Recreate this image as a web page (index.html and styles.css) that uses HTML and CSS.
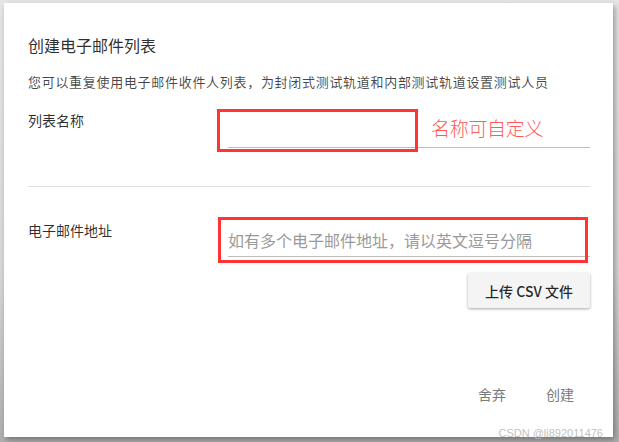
FILE: index.html
```html
<!DOCTYPE html>
<html lang="zh-CN">
<head>
<meta charset="utf-8">
<title>创建电子邮件列表</title>
<link rel="stylesheet" href="styles.css">
</head>
<body>
<div class="dialog">
  <h1 class="title">创建电子邮件列表</h1>
  <p class="subtitle">您可以重复使用电子邮件收件人列表，为封闭式测试轨道和内部测试轨道设置测试人员</p>

  <div class="row row-name">
    <div class="label">列表名称</div>
    <div class="field field-name">
      <span class="mark mark-name"></span>
      <span class="note">名称可自定义</span>
    </div>
  </div>

  <div class="divider"></div>

  <div class="row row-email">
    <div class="label">电子邮件地址</div>
    <div class="field-col">
      <div class="field field-email">
        <span class="placeholder">如有多个电子邮件地址，请以英文逗号分隔</span>
        <span class="mark mark-email"></span>
      </div>
      <button class="upload">上传 CSV 文件</button>
    </div>
  </div>

  <div class="footer">
    <button class="flat">舍弃</button>
    <button class="flat">创建</button>
  </div>

  <span class="watermark">CSDN @li892011476</span>
</div>
</body>
</html>
```

FILE: styles.css
```css
html, body {
  margin: 0;
  padding: 0;
}
body {
  width: 619px;
  height: 442px;
  overflow: hidden;
  background: linear-gradient(to bottom, #e6e6e6 0, #d9d9d9 60%, #b0b0b0 100%);
  font-family: "Noto Sans CJK SC", "Noto Sans", "Liberation Sans", sans-serif;
  padding: 3px 6px 0 4px;
  box-sizing: border-box;
}
.dialog {
  position: relative;
  width: 609px;
  height: 434px;
  background: #fff;
  box-shadow: 2px 3px 6px rgba(0,0,0,0.35);
  box-sizing: border-box;
  padding: 30px 23px 25px 24px;
  display: flex;
  flex-direction: column;
}
.title {
  margin: 0;
  font-size: 16px;
  line-height: 24px;
  font-weight: 400;
  color: rgba(0,0,0,0.84);
}
.subtitle {
  margin: 15px 0 0;
  font-size: 13px;
  letter-spacing: 0.7px;
  line-height: 20px;
  color: rgba(0,0,0,0.72);
  white-space: nowrap;
}
.row {
  display: grid;
  grid-template-columns: 200px 1fr;
}
.row-name {
  margin-top: 17px;
}
.label {
  font-size: 14px;
  line-height: 20px;
  color: rgba(0,0,0,0.82);
}
.row-name .label {
  padding-top: 1px;
}
.row-email .label {
  padding-top: 3px;
}
.field {
  position: relative;
  border-bottom: 1px solid #bdbdbd;
  box-sizing: border-box;
}
.field-name {
  height: 39px;
}
.mark {
  position: absolute;
  border: 3px solid #ff3535;
  box-sizing: border-box;
}
.mark-name {
  left: -11px;
  top: 0;
  width: 201px;
  height: 43px;
}
.note {
  position: absolute;
  left: 203px;
  top: 7px;
  font-size: 19px;
  line-height: 24px;
  font-weight: 300;
  letter-spacing: -0.3px;
  color: #ff5a5a;
  white-space: nowrap;
}
.divider {
  height: 1px;
  background: #e0e0e0;
  margin-top: 38px;
}
.row-email {
  margin-top: 30px;
}
.field-col {
  display: flex;
  flex-direction: column;
  align-items: flex-end;
}
.field-email {
  width: 100%;
  height: 40px;
  padding-top: 11px;
}
.placeholder {
  display: block;
  font-size: 16px;
  line-height: 24px;
  color: #9a9a9a;
  white-space: nowrap;
}
.mark-email {
  left: -10px;
  top: 0;
  width: 370px;
  height: 46px;
}
.upload {
  margin-top: 16px;
  width: 122px;
  height: 35px;
  border: none;
  border-radius: 2px;
  background: #f4f4f4;
  box-shadow: 0 1px 3px rgba(0,0,0,0.35);
  font-family: inherit;
  font-size: 14px;
  font-weight: 500;
  color: rgba(0,0,0,0.85);
  padding: 0;
}
.footer {
  margin-top: auto;
  display: flex;
  justify-content: flex-end;
  gap: 8px;
}
.flat {
  height: 36px;
  padding: 0 16px;
  border: none;
  background: transparent;
  font-family: inherit;
  font-size: 14px;
  color: #7a7a7a;
}
.watermark {
  position: absolute;
  right: 10px;
  bottom: -3px;
  font-family: "Liberation Sans", sans-serif;
  font-size: 11px;
  line-height: 14px;
  color: #c2c2c2;
}
```
